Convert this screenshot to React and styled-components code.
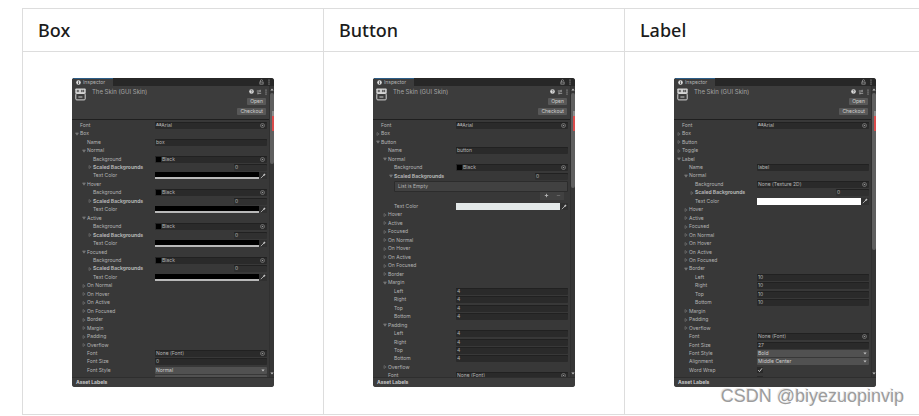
import React, { useId } from 'react';
import styled, { createGlobalStyle } from 'styled-components';

const GlobalStyle = createGlobalStyle`
    * {
        box-sizing: border-box;
    }
    body {
        margin: 0;
        background: #ffffff;
        font-family: "Noto Sans", sans-serif;
        overflow: hidden;
    }
    button, input, select {
        margin: 0;
        padding: 0;
        border: 0;
        border-radius: 0;
        font: inherit;
        color: inherit;
    }
`;

const Page = styled.main`
    position: relative;
    padding: 8px 0 0 22px;
    overflow: hidden;
`;

const Table = styled.table`
    width: 100%;
    min-width: 904px;
    table-layout: fixed;
    border-collapse: collapse;
`;

const Th = styled.th`
    height: 43px;
    padding: 0 15px;
    border: 1px solid #dddddd;
    text-align: left;
    font-size: 18px;
    line-height: 24px;
    font-weight: 500;
    color: #1b1b1b;
`;

const Td = styled.td`
    padding: 26px 49px 27px;
    border: 1px solid #dddddd;
    vertical-align: top;
`;

const Watermark = styled.div`
    position: absolute;
    right: 15px;
    bottom: 9px;
    font-family: "Liberation Sans", sans-serif;
    font-size: 18px;
    line-height: 20px;
    color: #9c9c9c;
    text-shadow: -1px -1px 0 #e8e8e8;
`;

const Panel = styled.section`
    display: flex;
    flex-direction: column;
    border-radius: 3px;
    overflow: hidden;
    background: #383838;
    color: #b4b4b4;
    font-family: Inter, sans-serif;
    font-size: 5px;
    line-height: 7px;
`;

const TabBar = styled.div`
    display: flex;
    align-items: center;
    height: 8px;
    padding-right: 1px;
    background: #272727;
`;

const Tab = styled.button`
    display: flex;
    align-items: center;
    gap: 2px;
    width: 41px;
    height: 8px;
    margin-right: auto;
    padding-left: 4px;
    border-top: 1px solid #2c5d87;
    background: #3c3c3c;
`;

const IconButton = styled.button`
    display: flex;
    align-items: center;
    justify-content: center;
    width: 8px;
    height: 7px;
    background: none;
`;

const HeaderIcon = styled(IconButton)`
    width: 7px;
`;

const Body = styled.div`
    display: flex;
    height: 291px;
`;

const Content = styled.div`
    flex: 1;
    min-width: 0;
    overflow: hidden;
`;

const Header = styled.header`
    display: flex;
    gap: 6px;
    height: 34px;
    padding: 2px 0 0 3px;
    border-bottom: 1px solid #1f1f1f;
    background: #3c3c3c;
`;

const Title = styled.h2`
    flex: 1;
    margin: 0;
    color: #a4a4a4;
    font-size: 6px;
    line-height: 7px;
    font-weight: 400;
`;

const Actions = styled.div`
    display: flex;
    flex-direction: column;
    align-items: flex-end;
    gap: 3px;
`;

const ActionIcons = styled.div`
    display: flex;
`;

const ActionButton = styled.button`
    height: 7px;
    margin-right: 3px;
    padding: 0 3px;
    border-radius: 1px;
    background: #585858;
    color: #d0d0d0;
`;

const Scrollbar = styled.div`
    display: flex;
    flex-direction: column;
    align-items: center;
    justify-content: space-between;
    width: 5px;
    padding: 2px 0;
    background: linear-gradient(to right, #303030 1px, #363636 1px);
`;

const Track = styled.div`
    flex: 1;
    width: 4px;
    padding-top: 2px;
`;

const Thumb = styled.div`
    height: ${props => props.$size}px;
    padding: 18px 0 0 2px;
    border-radius: 2px;
    background: #5f5f5f;
`;

const Mark = styled.div`
    height: 20px;
    border-top: 5px solid #8c8c8c;
    background: #d94b4b;
`;

const Properties = styled.div`
    display: flex;
    flex-direction: column;
    height: ${props => props.$height}px;
    margin-top: 1px;
`;

const Row = styled.div`
    display: grid;
    grid-template-columns: 83px minmax(0, 1fr);
    align-items: center;
    flex: 1;
    min-height: 0;
    padding-right: 2px;
`;

const Name = styled.label`
    padding-left: ${props => props.$indent}px;
    line-height: 7px;
    white-space: nowrap;
`;

const Foldout = styled.button`
    display: flex;
    align-items: center;
    gap: 1px;
    height: 7px;
    padding-left: ${props => props.$indent}px;
    background: none;
    font-weight: ${props => (props.$bold ? 700 : 400)};
    line-height: 7px;
    white-space: nowrap;
`;

const Field = styled.div`
    display: flex;
    align-items: center;
    height: 7px;
    padding: 0 1px;
    border-radius: 1px;
    background: #2a2a2a;
    box-shadow: inset 0 1px 0 #212121;
`;

const FieldInput = styled.input`
    flex: 1;
    min-width: 0;
    height: 7px;
    background: none;
    line-height: 7px;
    outline: none;
`;

const CountField = styled(Field)`
    width: 33px;
    margin-left: auto;
    background: #303030;
`;

const Swatch = styled.span`
    width: 5px;
    height: 5px;
    margin-right: 1px;
    background: #000000;
`;

const FontMark = styled.span`
    font-size: 4px;
    font-weight: 700;
    line-height: 6px;
`;

const ColorField = styled.div`
    display: flex;
    align-items: center;
    height: 7px;
    background: #303030;
`;

const ColorButton = styled.button`
    flex: 1;
    height: 7px;
    border-bottom: ${props => (props.$color === '#000000' ? '2px solid #b9b9b9' : '0')};
    background: ${props => props.$color};
`;

const SelectBox = styled.div`
    display: flex;
    align-items: center;
    height: 7px;
    padding-right: 2px;
    border-radius: 1px;
    background: #515151;
    color: #d0d0d0;
`;

const Select = styled.select`
    flex: 1;
    height: 7px;
    padding-left: 1px;
    appearance: none;
    background: none;
    line-height: 7px;
`;

const CheckWrap = styled.div`
    display: grid;
    width: 6px;
    height: 6px;
    background: #2a2a2a;

    & > * {
        grid-area: 1 / 1;
    }
`;

const Check = styled.input`
    width: 6px;
    height: 6px;
    appearance: none;
`;

const ListBox = styled.div`
    display: flex;
    flex-direction: column;
    align-items: flex-end;
    height: 22px;
    padding: 1px 2px 0 21px;
`;

const ListBody = styled.div`
    width: 100%;
    height: 11px;
    padding-left: 3px;
    border: 1px solid #2c2c2c;
    border-radius: 1px;
    background: #414141;
    line-height: 9px;
`;

const ListFooter = styled.div`
    display: flex;
    justify-content: space-around;
    width: 24px;
    height: 8px;
    margin-right: 4px;
    background: #414141;
`;

const Footer = styled.footer`
    height: 10px;
    padding-left: 4px;
    border-top: 1px solid #2e2e2e;
    background: #3c3c3c;
    color: #c8c8c8;
    font-weight: 700;
    line-height: 9px;
`;

const Kebab = () => (
    <svg width="2" height="6" viewBox="0 0 2 6" fill="#c4c4c4">
        <circle cx="1" cy="1" r="0.6" />
        <circle cx="1" cy="3" r="0.6" />
        <circle cx="1" cy="5" r="0.6" />
    </svg>
);

const Lock = () => (
    <svg width="5" height="6" viewBox="0 0 5 6" fill="none" stroke="#a8a8a8" strokeWidth="0.7">
        <path d="M1.4 3V1.8a1.1 1.1 0 0 1 2.2 0" />
        <rect x="0.9" y="3" width="3.2" height="2.1" />
    </svg>
);

const Info = () => (
    <svg width="5" height="5" viewBox="0 0 5 5">
        <circle cx="2.5" cy="2.5" r="2.3" fill="#dcdcdc" />
        <path d="M2.5 1v0.7M2.5 2.2v1.8" stroke="#333333" strokeWidth="0.8" />
    </svg>
);

const Help = () => (
    <svg width="5" height="5" viewBox="0 0 5 5">
        <circle cx="2.5" cy="2.5" r="2.3" fill="#dcdcdc" />
        <path d="M1.8 1.8a0.7 0.7 0 1 1 0.9 0.9v0.4M2.6 3.6v0.5" fill="none" stroke="#333333" strokeWidth="0.6" />
    </svg>
);

const Preset = () => (
    <svg width="6" height="6" viewBox="0 0 6 6" fill="none" stroke="#b4b4b4" strokeWidth="0.8">
        <path d="M0.8 2h3.4M1.8 4.3h3.4M4.2 0.8v2.2M1.9 3.2v2.2" />
    </svg>
);

const SkinIcon = () => (
    <svg width="11" height="13" viewBox="0 0 11 13">
        <rect x="0.3" y="0.5" width="10.4" height="5.2" rx="0.8" fill="#d4d4d4" />
        <path d="M1.6 3h2.6M2.9 1.8v2.4M6.8 1.8v2.4M5.8 3h3.2M8.7 1.8v2.4" stroke="#3c3c3c" strokeWidth="0.8" />
        <rect x="0.8" y="5.5" width="9.4" height="6.4" rx="1" fill="#3c3c3c" stroke="#d4d4d4" strokeWidth="1" />
        <path d="M3.4 9h4" stroke="#d4d4d4" strokeWidth="0.9" />
    </svg>
);

const Triangle = ({ open }) => (
    <svg width="4" height="4" viewBox="0 0 4 4" fill={open ? '#6e6e6e' : 'none'} stroke="#858585" strokeWidth="0.5">
        <path d={open ? 'M0.5 0.9h3L2 3.3z' : 'M1 0.5v3L3.2 2z'} />
    </svg>
);

const Arrow = ({ up }) => (
    <svg width="4" height="3" viewBox="0 0 4 3" fill="#c4c4c4">
        <path d={up ? 'M0.4 2.5h3.2L2 0.5z' : 'M0.4 0.5h3.2L2 2.5z'} />
    </svg>
);

const Picker = () => (
    <IconButton aria-label="Pick object">
        <svg width="5" height="5" viewBox="0 0 5 5">
            <circle cx="2.5" cy="2.5" r="2" fill="none" stroke="#969696" strokeWidth="0.6" />
            <circle cx="2.5" cy="2.5" r="0.8" fill="#969696" />
        </svg>
    </IconButton>
);

const Dropper = () => (
    <IconButton aria-label="Pick color">
        <svg width="6" height="6" viewBox="0 0 6 6" fill="none" stroke="#c4c4c4">
            <path d="M0.8 5.2L3.6 2.4" strokeWidth="0.8" />
            <path d="M3.3 2.7L5 1" strokeWidth="1.5" />
        </svg>
    </IconButton>
);

const Plus = () => (
    <svg width="5" height="5" viewBox="0 0 5 5" stroke="#b4b4b4" strokeWidth="0.9">
        <path d="M0.8 2.5h3.4M2.5 0.8v3.4" />
    </svg>
);

const Minus = () => (
    <svg width="5" height="5" viewBox="0 0 5 5" stroke="#6c6c6c" strokeWidth="0.9">
        <path d="M0.8 2.5h3.4" />
    </svg>
);

const Tick = () => (
    <svg width="6" height="6" viewBox="0 0 6 6" fill="none" stroke="#d8d8d8" strokeWidth="0.9">
        <path d="M1.2 3.2l1.3 1.4L5 1.3" />
    </svg>
);

const fold = (name, level, open = false) => ({ kind: 'fold', name, level, open });
const text = (name, level, value) => ({ kind: 'text', name, level, value });
const object = (name, level, value, icon) => ({ kind: 'object', name, level, value, icon });
const scaled = (open = false) => ({ kind: 'fold', name: 'Scaled Backgrounds', level: 2, open, bold: true, count: '0' });
const color = value => ({ kind: 'color', name: 'Text Color', level: 2, value });
const select = (name, value) => ({ kind: 'select', name, level: 1, value });
const check = (name, checked) => ({ kind: 'check', name, level: 1, checked });
const sides = value => ['Left', 'Right', 'Top', 'Bottom'].map(side => text(side, 2, value));
const folds = names => names.map(name => fold(name, 1));
const blackState = name => [
    fold(name, 1, true),
    object('Background', 2, 'Black', 'swatch'),
    scaled(),
    color('#000000')
];
const onStates = ['On Normal', 'On Hover', 'On Active', 'On Focused'];

const skins = [
    {
        title: 'Box',
        height: 262,
        thumb: 71,
        rows: [
            object('Font', 0, 'Arial', 'font'),
            fold('Box', 0, true),
            text('Name', 1, 'box'),
            ...['Normal', 'Hover', 'Active', 'Focused'].flatMap(blackState),
            ...folds([...onStates, 'Border', 'Margin', 'Padding', 'Overflow']),
            object('Font', 1, 'None (Font)'),
            text('Font Size', 1, '0'),
            select('Font Style', 'Normal'),
            select('', '')
        ]
    },
    {
        title: 'Button',
        height: 259,
        thumb: 95,
        rows: [
            object('Font', 0, 'Arial', 'font'),
            fold('Box', 0),
            fold('Button', 0, true),
            text('Name', 1, 'button'),
            fold('Normal', 1, true),
            object('Background', 2, 'Black', 'swatch'),
            scaled(true),
            { kind: 'list' },
            color('#e3e8e8'),
            ...folds(['Hover', 'Active', 'Focused', ...onStates, 'Border']),
            fold('Margin', 1, true),
            ...sides('4'),
            fold('Padding', 1, true),
            ...sides('4'),
            fold('Overflow', 1),
            object('Font', 1, 'None (Font)')
        ]
    },
    {
        title: 'Label',
        height: 262,
        thumb: 157,
        rows: [
            object('Font', 0, 'Arial', 'font'),
            fold('Box', 0),
            fold('Button', 0),
            fold('Toggle', 0),
            fold('Label', 0, true),
            text('Name', 1, 'label'),
            fold('Normal', 1, true),
            object('Background', 2, 'None (Texture 2D)'),
            scaled(),
            color('#ffffff'),
            ...folds(['Hover', 'Active', 'Focused', ...onStates]),
            fold('Border', 1, true),
            ...sides('10'),
            ...folds(['Margin', 'Padding', 'Overflow']),
            object('Font', 1, 'None (Font)'),
            text('Font Size', 1, '27'),
            select('Font Style', 'Bold'),
            select('Alignment', 'Middle Center'),
            check('Word Wrap', true),
            check('', false)
        ]
    }
];

const labelIndent = [8, 15, 21];
const foldIndent = [3, 10, 16];

function Control({ id, row }) {
    switch (row.kind) {
        case 'text':
            return <Field><FieldInput id={id} defaultValue={row.value} /></Field>;
        case 'object':
            return (
                <Field>
                    {row.icon === 'swatch' && <Swatch />}
                    {row.icon === 'font' && <FontMark>Aa</FontMark>}
                    <FieldInput id={id} defaultValue={row.value} />
                    <Picker />
                </Field>
            );
        case 'color':
            return (
                <ColorField>
                    <ColorButton id={id} $color={row.value} />
                    <Dropper />
                </ColorField>
            );
        case 'select':
            return (
                <SelectBox>
                    <Select id={id} defaultValue={row.value} aria-label={row.name || 'Alignment'}>
                        <option>{row.value}</option>
                    </Select>
                    <Arrow />
                </SelectBox>
            );
        default:
            return (
                <CheckWrap>
                    <Check id={id} type="checkbox" defaultChecked={row.checked} aria-label={row.name || 'Rich Text'} />
                    {row.checked && <Tick />}
                </CheckWrap>
            );
    }
}

function Property({ row }) {
    const id = useId();

    if (row.kind === 'list') {
        return (
            <ListBox>
                <ListBody>List is Empty</ListBody>
                <ListFooter>
                    <IconButton aria-label="Add"><Plus /></IconButton>
                    <IconButton aria-label="Remove"><Minus /></IconButton>
                </ListFooter>
            </ListBox>
        );
    }

    if (row.kind === 'fold') {
        return (
            <Row>
                <Foldout $indent={foldIndent[row.level]} $bold={row.bold} aria-expanded={row.open}>
                    <Triangle open={row.open} />
                    {row.name}
                </Foldout>
                {row.count && (
                    <CountField>
                        <FieldInput aria-label={row.name} defaultValue={row.count} />
                    </CountField>
                )}
            </Row>
        );
    }

    return (
        <Row>
            <Name htmlFor={id} $indent={labelIndent[row.level]}>{row.name}</Name>
            <Control id={id} row={row} />
        </Row>
    );
}

function Inspector({ skin }) {
    return (
        <Panel>
            <TabBar>
                <Tab><Info />Inspector</Tab>
                <IconButton aria-label="Lock"><Lock /></IconButton>
                <IconButton aria-label="Tab menu"><Kebab /></IconButton>
            </TabBar>
            <Body>
                <Content>
                    <Header>
                        <SkinIcon />
                        <Title>The Skin (GUI Skin)</Title>
                        <Actions>
                            <ActionIcons>
                                <HeaderIcon aria-label="Help"><Help /></HeaderIcon>
                                <HeaderIcon aria-label="Presets"><Preset /></HeaderIcon>
                                <HeaderIcon aria-label="More"><Kebab /></HeaderIcon>
                            </ActionIcons>
                            <ActionButton>Open</ActionButton>
                            <ActionButton>Checkout</ActionButton>
                        </Actions>
                    </Header>
                    <Properties $height={skin.height}>
                        {skin.rows.map((row, i) => <Property key={i} row={row} />)}
                    </Properties>
                </Content>
                <Scrollbar>
                    <Arrow up />
                    <Track>
                        <Thumb $size={skin.thumb}><Mark /></Thumb>
                    </Track>
                    <Arrow />
                </Scrollbar>
            </Body>
            <Footer>Asset Labels</Footer>
        </Panel>
    );
}

export default function App() {
    return (
        <>
            <GlobalStyle />
            <Page>
                <Table>
                    <thead>
                        <tr>
                            {skins.map(skin => <Th key={skin.title} scope="col">{skin.title}</Th>)}
                        </tr>
                    </thead>
                    <tbody>
                        <tr>
                            {skins.map(skin => (
                                <Td key={skin.title}><Inspector skin={skin} /></Td>
                            ))}
                        </tr>
                    </tbody>
                </Table>
                <Watermark>CSDN @biyezuopinvip</Watermark>
            </Page>
        </>
    );
}
